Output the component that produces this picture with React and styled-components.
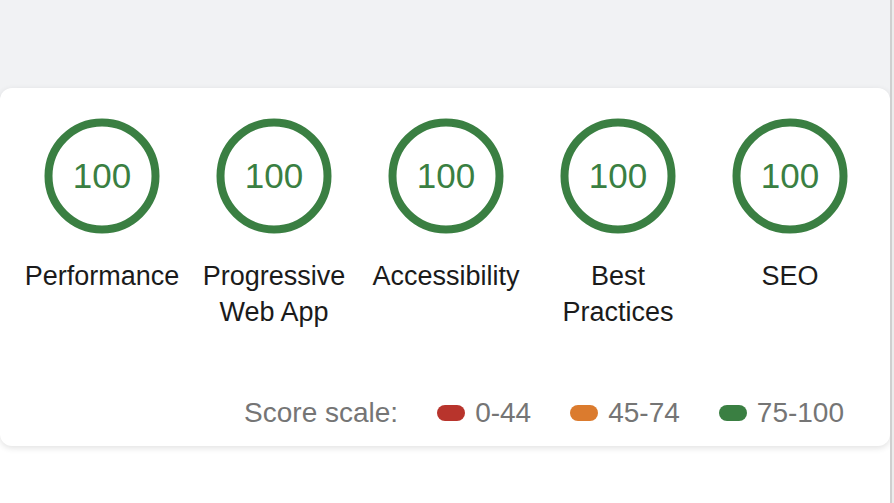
import styled, { createGlobalStyle } from "styled-components";

const GlobalStyle = createGlobalStyle`
    html, body {
        margin: 0;
        padding: 0;
        height: 100%;
    }
    body {
        font-family: "Liberation Sans", Arial, Helvetica, sans-serif;
        background: linear-gradient(#f1f2f4 0, #f1f2f4 130px, #ffffff 130px);
    }
`;

const categories = [
    { name: "Performance", score: 100 },
    { name: "Progressive Web App", score: 100 },
    { name: "Accessibility", score: 100 },
    { name: "Best Practices", score: 100 },
    { name: "SEO", score: 100 },
];

const scale = [
    { range: "0-44", color: "#b8342c" },
    { range: "45-74", color: "#db7b2e" },
    { range: "75-100", color: "#3a7f42" },
];

function Gauge({ score }) {
    return (
        <Dial>
            <svg width="116" height="116" viewBox="0 0 116 116">
                <circle cx="58" cy="58" r="53.5" fill="none" stroke="#3a7f42" strokeWidth="8" />
            </svg>
            <Score>{score}</Score>
        </Dial>
    );
}

export default function App() {
    return (
        <Frame>
            <GlobalStyle />
            <Content>
                <Card>
                    <Gauges>
                        {categories.map((c) => (
                            <Category key={c.name}>
                                <Gauge score={c.score} />
                                <Label>{c.name}</Label>
                            </Category>
                        ))}
                    </Gauges>
                    <Legend>
                        <LegendTitle>Score scale:</LegendTitle>
                        {scale.map((s) => (
                            <LegendItem key={s.range}>
                                <Pill $color={s.color} />
                                {s.range}
                            </LegendItem>
                        ))}
                    </Legend>
                </Card>
            </Content>
            <Edge />
        </Frame>
    );
}

const Frame = styled.div`
    display: flex;
    width: 894px;
    height: 503px;
    overflow: hidden;
`

const Content = styled.div`
    flex: 1;
    padding-top: 88px;
`

const Edge = styled.div`
    width: 2px;
    background: #ececec;
    border-left: 2px solid #cfcfcf;
`

const Card = styled.div`
    width: 890px;
    box-sizing: border-box;
    background: #ffffff;
    border-radius: 12px;
    box-shadow: 0 2px 6px rgba(0, 0, 0, 0.12);
    padding: 30px 14px 15px 16px;
`

const Gauges = styled.div`
    display: flex;
`

const Category = styled.div`
    width: 172px;
    display: flex;
    flex-direction: column;
    align-items: center;
`

const Dial = styled.div`
    position: relative;
    width: 116px;
    height: 116px;
    display: flex;
    align-items: center;
    justify-content: center;

    svg {
        position: absolute;
        top: 0;
        left: 0;
    }
`

const Score = styled.span`
    font-size: 35px;
    color: #3a7f42;
    line-height: 1;
    margin-top: -2px;
`

const Label = styled.div`
    margin-top: 24px;
    font-size: 27px;
    line-height: 36px;
    color: #1b1b1b;
    text-align: center;
    width: 160px;
    height: 72px;
`

const Legend = styled.div`
    margin-top: 65px;
    display: flex;
    justify-content: flex-end;
    align-items: center;
    gap: 39px;
    padding-right: 32px;
    height: 36px;
    font-size: 28px;
    color: #757575;
`

const LegendTitle = styled.span``

const LegendItem = styled.span`
    display: flex;
    align-items: center;
    gap: 10px;
`

const Pill = styled.span`
    width: 28px;
    height: 16px;
    border-radius: 8px;
    background: ${(p) => p.$color};
`
